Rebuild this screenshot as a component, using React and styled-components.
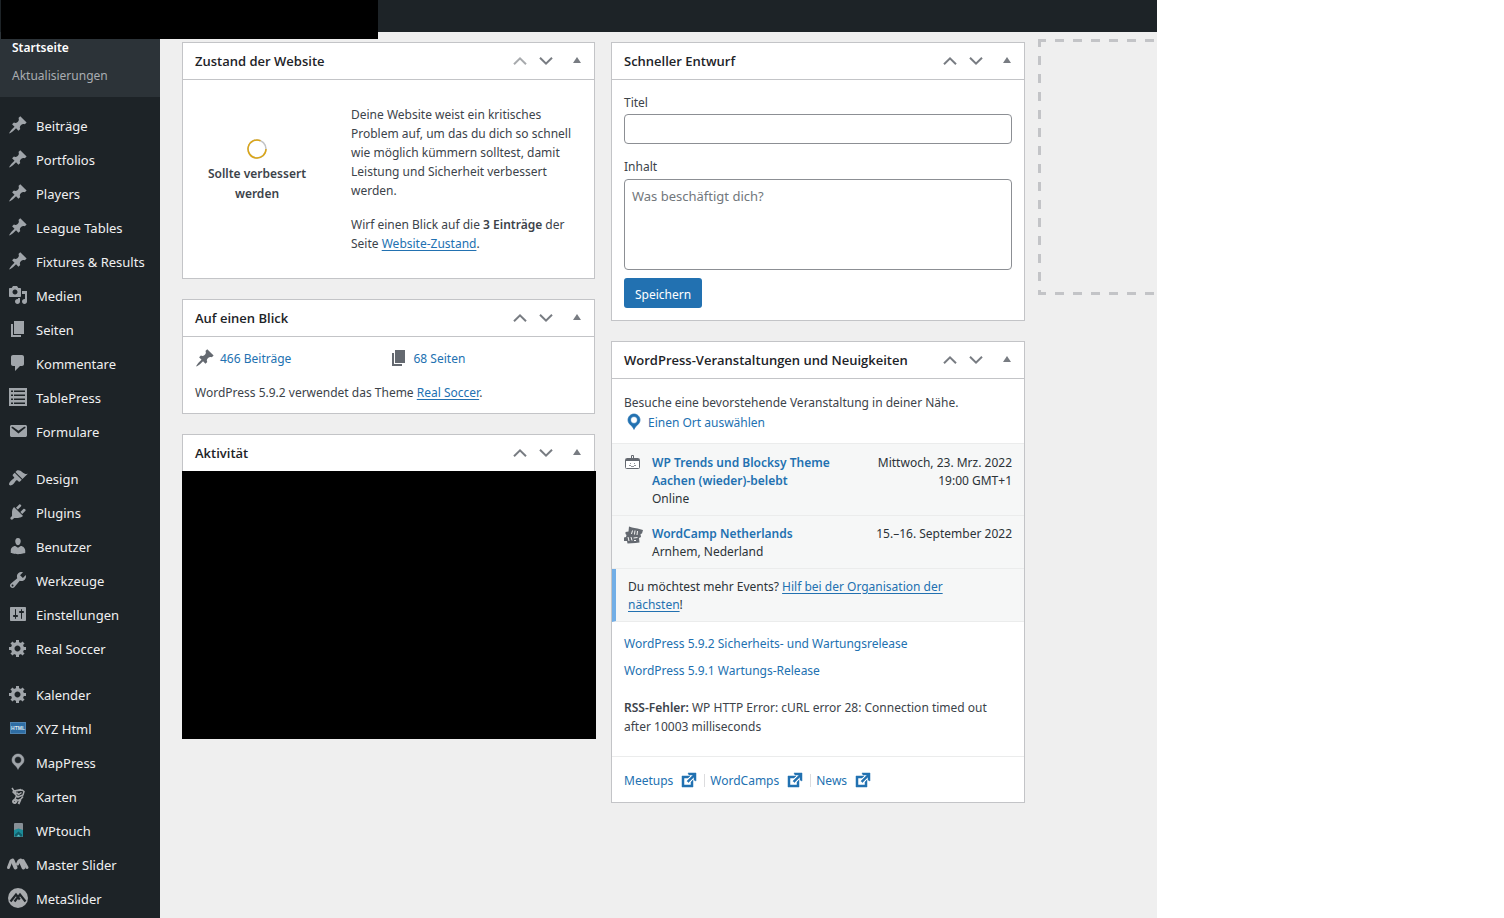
import styled, { createGlobalStyle } from "styled-components";

const GlobalStyle = createGlobalStyle`
  * {
    box-sizing: border-box;
  }
  body {
    margin: 0;
    background: #fff;
    color: #3c434a;
    font-family: "Noto Sans", "Open Sans", sans-serif;
    font-size: 12px;
    line-height: 19px;
  }
  p, h2, ul {
    margin: 0;
    padding: 0;
  }
  ul {
    list-style: none;
  }
  svg {
    display: block;
    flex: none;
  }
`;

// ---------- shell ----------

const Shell = styled.div`
  display: flex;
  flex-direction: column;
  min-height: 100vh;
  margin-right: 347px;
  background: #efefef;
  position: relative;
`;

const AdminBar = styled.header`
  height: 32px;
  background: #1d2327;
`;

const AdminBarCover = styled.div`
  position: absolute;
  top: 0;
  left: 1px;
  width: 377px;
  height: 39px;
  background: #000;
`;

const Page = styled.div`
  display: flex;
  flex: 1;
`;

// ---------- sidebar ----------

const Sidebar = styled.nav`
  flex: 0 0 160px;
  background: #1d2327;
`;

const SubMenu = styled.ul`
  padding: 2px 0 7px;
  margin-bottom: 12px;
  background: #2c3338;
`;

const SubLink = styled.a`
  display: block;
  padding: 0 12px;
  line-height: 28px;
  text-decoration: none;
  color: ${(p) => (p.$current ? "#fff" : "#a9adb1")};
  font-weight: ${(p) => (p.$current ? 600 : 400)};
`;

const MenuGroup = styled.ul`
  margin-bottom: ${(p) => p.$space || 0}px;
`;

const MenuLink = styled.a`
  display: flex;
  align-items: center;
  height: 34px;
  color: #f0f0f1;
  font-size: 13px;
  text-decoration: none;
  white-space: nowrap;
`;

const MenuIcon = styled.span`
  display: flex;
  justify-content: center;
  width: 36px;
  color: #a0a5aa;
  padding-bottom: 2px;
`;

// ---------- dashboard ----------

const Dashboard = styled.main`
  display: flex;
  flex: 1;
  min-width: 0;
  padding-left: 22px;
  overflow: hidden;
`;

const Column = styled.div`
  display: flex;
  flex-direction: column;
  flex: 0 0 44%;
  min-width: 0;
  gap: 20px;
  padding: 10px 16px 20px 0;
  & + & {
    padding-right: 15px;
  }
`;

const DropColumn = styled.div`
  flex: 0 0 44%;
  margin-left: -2px;
  padding-top: 7px;
`;

const DropZone = styled.div`
  height: 256px;
  background:
    repeating-linear-gradient(to right, #c3c4c7 0 9px, transparent 9px 18px) -1px 0 / 540px 3px repeat-x,
    repeating-linear-gradient(to right, #c3c4c7 0 9px, transparent 9px 18px) -1px 100% / 540px 3px repeat-x,
    repeating-linear-gradient(to bottom, #c3c4c7 0 9px, transparent 9px 18px) 0 -1px / 3px 270px no-repeat;
`;

const Box = styled.section`
  background: #fff;
  border: 1px solid #c3c4c7;
`;

const BoxHeader = styled.div`
  display: flex;
  align-items: center;
  height: 37px;
  padding-left: 12px;
  border-bottom: 1px solid #c3c4c7;
`;

const BoxTitle = styled.h2`
  flex: 1;
  color: #1d2327;
  font-family: "Open Sans", "Noto Sans", sans-serif;
  font-size: 13px;
  font-weight: 600;
  line-height: 18px;
`;

const HandleButton = styled.button`
  display: flex;
  align-items: center;
  justify-content: center;
  width: ${(p) => (p.$wide ? 35 : 26)}px;
  height: 36px;
  padding: 0;
  border: 0;
  background: none;
  color: ${(p) => (p.$faded ? "#a7aaad" : "#787c82")};
`;

const Link = styled.a`
  color: #2271b1;
  text-decoration: ${(p) => (p.$plain ? "none" : "underline")};
  text-underline-offset: 2px;
  font-weight: ${(p) => (p.$bold ? 600 : 400)};
`;

const Bold = styled.strong`
  font-weight: 600;
`;

// site health
const Health = styled.div`
  display: grid;
  grid-template-columns: 124px 1fr;
  gap: 32px;
  padding: 25px 12px;
`;

const HealthStatus = styled.div`
  display: flex;
  flex-direction: column;
  align-items: center;
  gap: 5px;
  padding-top: 34px;
  font-weight: 600;
  text-align: center;
  line-height: 20px;
`;

const HealthText = styled.div`
  display: flex;
  flex-direction: column;
  gap: 15px;
`;

// at a glance
const Glance = styled.div`
  padding: 11px 12px;
`;

const GlanceList = styled.ul`
  display: grid;
  grid-template-columns: 1fr 1fr;
  margin-bottom: 15px;
`;

const GlanceItem = styled.li`
  display: flex;
  align-items: center;
  gap: 5px;
  color: #646970;
`;

const ActivityCover = styled.div`
  height: 268px;
  margin: -1px -2px -1px -1px;
  background: #000;
`;

// quick draft
const DraftForm = styled.form`
  display: flex;
  flex-direction: column;
  align-items: flex-start;
  padding: 13px 12px 12px;
`;

const Label = styled.label`
  line-height: 20px;
  margin-bottom: ${(p) => p.$gap}px;
`;

const TextInput = styled.input`
  width: 100%;
  height: 30px;
  margin-bottom: 13px;
  padding: 0 8px;
  border: 1px solid #8c8f94;
  border-radius: 4px;
  font: inherit;
`;

const TextArea = styled.textarea`
  width: 100%;
  height: 91px;
  margin-bottom: 8px;
  padding: 6px 7px;
  border: 1px solid #8c8f94;
  border-radius: 4px;
  font-family: inherit;
  font-size: 13px;
  line-height: 20px;
  resize: none;
  &::placeholder {
    color: #72777c;
  }
`;

const SaveButton = styled.button`
  height: 30px;
  padding: 2px 11px 0;
  border: 0;
  border-radius: 3px;
  background: #2271b1;
  color: #fff;
  font: inherit;
`;

// events and news
const Location = styled.div`
  padding: 14px 12px 11px;
`;

const LocationLink = styled(Link)`
  display: flex;
  align-items: center;
  gap: 4px;
  height: 20px;
`;

const EventList = styled.ul`
  padding-top: 1px;
  border-top: 1px solid #ebecec;
  background: #f6f7f7;
  color: #2c3338;
  line-height: 18px;
`;

const EventItem = styled.li`
  display: flex;
  padding: 9px 12px 7px;
  border-bottom: 1px solid #ebecec;
`;

const EventIcon = styled.span`
  width: 28px;
  color: #646970;
`;

const EventInfo = styled.div`
  flex: 1;
  padding-right: 24px;
`;

const EventDate = styled.div`
  text-align: right;
  span {
    display: block;
  }
`;

const MoreEvents = styled.li`
  padding: 9px 56px 7px 12px;
  border-left: 4px solid #72aee6;
  border-bottom: 1px solid #ebecec;
`;

const NewsList = styled.ul`
  padding: 12px 12px 0;
`;

const NewsItem = styled.li`
  margin-bottom: 8px;
`;

const FeedError = styled.p`
  padding: 10px 12px 20px;
`;

const BoxFooter = styled.div`
  display: flex;
  align-items: center;
  height: 46px;
  padding: 1px 12px 0;
  border-top: 1px solid #ebecec;
`;

const FooterLink = styled(Link)`
  display: flex;
  align-items: center;
  gap: 6px;
  height: 13px;
  & + & {
    margin-left: 5px;
    padding-left: 5px;
    border-left: 1px solid #dcdcde;
  }
`;

// ---------- icons ----------

const Icon = ({ d, size = 20, stroke = 0 }) => (
  <svg
    width={size}
    height={size}
    viewBox="0 0 20 20"
    fill="currentColor"
    stroke={stroke ? "currentColor" : "none"}
    strokeWidth={stroke}
    fillRule="evenodd"
    aria-hidden="true"
  >
    <path d={d} />
  </svg>
);

const paths = {
  pin: "M10.44 3.02l1.82-1.82 6.36 6.35-1.83 1.82c-1.05-.68-2.48-.57-3.41.36l-.75.75c-.92.93-1.04 2.35-.35 3.41l-1.83 1.82-2.41-2.41-2.8 2.79c-.42.42-3.38 2.71-3.8 2.29s1.86-3.39 2.28-3.81l2.79-2.79L4.1 9.36l1.83-1.82c1.05.69 2.48.57 3.4-.36l.75-.75c.93-.92 1.05-2.35.36-3.41z",
  media: "M13 11V4c0-.55-.45-1-1-1h-1.67L9 1H5L3.67 3H2c-.55 0-1 .45-1 1v7c0 .55.45 1 1 1h10c.55 0 1-.45 1-1zM7 4.5c1.38 0 2.5 1.12 2.5 2.5S8.38 9.5 7 9.5 4.5 8.38 4.5 7 5.62 4.5 7 4.5zM14 6h5v10.5c0 1.38-1.12 2.5-2.5 2.5S14 17.88 14 16.5s1.12-2.5 2.5-2.5c.17 0 .34.02.5.05V9h-3V6zm-4 8.05V13h2v3.5c0 1.38-1.12 2.5-2.5 2.5S7 17.88 7 16.5 8.12 14 9.5 14c.17 0 .34.02.5.05z",
  page: "M6 15V2h10v13H6zm-1 1h8v2H3V5h2v11z",
  comment: "M5 2h9c1.1 0 2 .9 2 2v7c0 1.1-.9 2-2 2h-2l-5 5v-5H5c-1.1 0-2-.9-2-2V4c0-1.1.9-2 2-2z",
  list: "M1 1h18v18H1zM3 3.500v1.500h2V3.500zM6 3.500v1.500h11V3.500zM3 7.500v1.500h2V7.500zM6 7.500v1.500h11V7.500zM3 11.500v1.500h2v-1.500zM6 11.500v1.500h11v-1.500zM3 15.500v1.500h2v-1.500zM6 15.500v1.500h11v-1.500z",
  mail: "M3.87 4h13.25C18.37 4 19 4.59 19 5.79v8.42c0 1.19-.63 1.79-1.88 1.79H3.87c-1.25 0-1.88-.6-1.88-1.79V5.79c0-1.2.63-1.79 1.88-1.79zm6.62 8.6l6.74-5.53c.24-.2.43-.66.13-1.07-.29-.41-.82-.42-1.17-.17l-5.7 3.86L4.8 5.83c-.35-.25-.88-.24-1.17.17-.3.41-.11.87.13 1.07z",
  brush: "M14.48 11.06L7.41 3.99l1.5-1.5c.5-.56 2.3-.47 3.51.32 1.21.8 1.43 1.28 2.91 2.1 1.18.64 2.45 1.26 4.45.85zm-.71.71L6.7 4.7 4.93 6.47c-.39.39-.39 1.02 0 1.41l1.06 1.06c.39.39.39 1.03 0 1.42-.6.6-1.43 1.11-2.21 1.69-.35.26-.7.53-1.01.84C1.43 14.23.4 16.08 1.4 17.07c.99 1 2.84-.03 4.18-1.36.31-.31.58-.66.85-1.02.57-.78 1.08-1.61 1.69-2.21.39-.39 1.02-.39 1.41 0l1.06 1.06c.39.39 1.02.39 1.41 0z",
  plug: "M13.11 4.36L9.87 7.6 8 5.73l3.24-3.24c.35-.34 1.05-.2 1.56.32.52.51.66 1.21.31 1.55zm-8 1.77l.91-1.12 9.01 9.01-1.19.84c-.71.71-2.63 1.16-3.82 1.16H6.14L4.9 17.26c-.59.59-1.54.59-2.12 0-.59-.58-.59-1.53 0-2.12l1.24-1.24v-3.88c0-1.13.4-3.19 1.09-3.89zm7.26 3.97l3.24-3.24c.34-.35 1.04-.21 1.55.31.52.51.66 1.21.31 1.55l-3.24 3.25z",
  user: "M10 9.25c-2.27 0-2.73-3.44-2.73-3.44C7 4.02 7.82 2 9.97 2c2.16 0 2.98 2.02 2.71 3.81 0 0-.41 3.44-2.68 3.44zm0 2.57L12.72 10c2.39 0 4.52 2.33 4.52 4.53v2.49s-3.65 1.13-7.24 1.13c-3.65 0-7.24-1.13-7.24-1.13v-2.49c0-2.25 1.94-4.48 4.47-4.48z",
  wrench: "M16.68 9.77c-1.34 1.34-3.3 1.67-4.95.99l-5.41 6.52c-.99.99-2.59.99-3.58 0s-.99-2.59 0-3.57l6.52-5.42c-.68-1.65-.35-3.61.99-4.95 1.28-1.28 3.12-1.62 4.72-1.06l-2.89 2.89 2.82 2.82 2.86-2.87c.53 1.58.18 3.39-1.08 4.65zM3.81 16.21c.4.39 1.04.39 1.43 0 .4-.4.4-1.04 0-1.43-.39-.4-1.03-.4-1.43 0-.39.39-.39 1.03 0 1.43z",
  sliders: "M18 16V4c0-.55-.45-1-1-1H3c-.55 0-1 .45-1 1v12c0 .55.45 1 1 1h14c.55 0 1-.45 1-1zM8 11h1c.55 0 1 .45 1 1s-.45 1-1 1H8v1.5c0 .28-.22.5-.5.5s-.5-.22-.5-.5V13H6c-.55 0-1-.45-1-1s.45-1 1-1h1V5.5c0-.28.22-.5.5-.5s.5.22.5.5V11zm5-2h-1c-.55 0-1-.45-1-1s.45-1 1-1h1V5.5c0-.28.22-.5.5-.5s.5.22.5.5V7h1c.55 0 1 .45 1 1s-.45 1-1 1h-1v5.5c0 .28-.22.5-.5.5s-.5-.22-.5-.5V9z",
  gear: "M18 12h-2.18c-.17.7-.44 1.35-.81 1.93l1.54 1.54-2.1 2.1-1.54-1.54c-.58.36-1.23.63-1.91.79V19H8v-2.18c-.68-.16-1.33-.43-1.91-.79l-1.54 1.54-2.12-2.12 1.54-1.54c-.36-.58-.63-1.23-.79-1.91H1V9.03h2.17c.16-.7.44-1.35.8-1.94L2.43 5.55l2.1-2.1 1.54 1.54c.58-.37 1.24-.64 1.93-.81V2h3v2.18c.68.16 1.33.43 1.91.79l1.54-1.54 2.12 2.12-1.54 1.54c.36.59.64 1.24.8 1.94H18V12zm-8.5 1.5c1.66 0 3-1.34 3-3s-1.34-3-3-3-3 1.34-3 3 1.34 3 3 3z",
  place: "M10 2C6.69 2 4 4.69 4 8c0 2.02 1.17 3.71 2.53 4.89.43.37 1.18.96 1.85 1.83.74.97 1.41 2.01 1.62 2.71.21-.7.88-1.74 1.62-2.71.67-.87 1.42-1.46 1.85-1.83C14.83 11.71 16 10.02 16 8c0-3.31-2.69-6-6-6zm0 2.56c1.9 0 3.44 1.54 3.44 3.44S11.9 11.44 10 11.44 6.56 9.9 6.56 8 8.1 4.56 10 4.56z",
  external: "M9 3h8v8l-2-1V6.92l-5.6 5.59-1.41-1.41L14.08 5H10zm3 12v-3l2-2v7H3V6h8L9 8H5v7h7z",
  up: "M3.300 12.600L10 5.900l6.700 6.700-1.400 1.400L10 8.700 4.700 14z",
  down: "M3.300 7.400L10 14.100l6.700-6.700-1.400-1.400L10 11.300 4.700 6z",
  triangle: "M6 12l4-6 4 6z",
};

const HtmlIcon = () => (
  <svg width="20" height="20" viewBox="0 0 20 20" aria-hidden="true">
    <rect x="2.500" y="4.500" width="15" height="11" fill="#2e6da4" stroke="#4f83b0" />
    <text x="10" y="12" textAnchor="middle" fontFamily="Liberation Sans" fontWeight="700" fontSize="5" fill="#dfe8f0">
      HTML
    </text>
  </svg>
);

const FigureIcon = () => (
  <svg width="20" height="20" viewBox="0 0 20 20" fill="none" stroke="#a8abae" strokeWidth="1.500" aria-hidden="true">
    <path d="M4 2l2 3 7-1.500M4.500 5.500L8 9M7 5l7-1 2 1.500-1 3.500-5 2-2-2zM8.500 6.500l2 2 3-2M8.500 10L7 13l3 1.500 3-1.500 2-2.500" />
    <path d="M7 14c-2 0-2.500 1.500-1.500 2.500s2.500.5 3-1zM12.500 13.500L10.500 18" strokeWidth="2" />
  </svg>
);

const PhoneIcon = () => (
  <svg width="20" height="20" viewBox="0 0 20 20" aria-hidden="true">
    <rect x="6" y="3" width="9" height="14" rx="1" fill="#878f96" />
    <path d="M6 10l4.500-1.500L15 10v6.500H6z" fill="#1c8b98" />
    <path d="M7 14.500l3.500-3 3.500 3v2H7z" fill="#105c68" />
    <path d="M8.500 16.500l2-2 2 2z" fill="#5ac0c8" />
  </svg>
);

const WaveIcon = () => (
  <svg width="24" height="20" viewBox="0 0 24 20" fill="none" stroke="#a8abae" strokeLinecap="round" aria-hidden="true">
    <path d="M2.500 13.500L5 7M11.500 10L13 7" strokeWidth="3" />
    <path d="M6.500 6.500L9.500 13.500M14.500 6.500L17.500 13.500" strokeWidth="4" />
    <path d="M17 6.500L21 13.500" strokeWidth="3" />
  </svg>
);

const MetaIcon = () => (
  <svg width="20" height="20" viewBox="0 0 20 20" aria-hidden="true">
    <circle cx="10" cy="10" r="10" fill="#a8abae" />
    <path d="M2.500 13.500L8 6.500l3.800 5M6.500 13.500L12 6.500l5.500 7" fill="none" stroke="#1d2327" strokeWidth="2.200" />
  </svg>
);

const BadgeIcon = () => (
  <svg width="18" height="18" viewBox="0 0 18 18" fill="none" stroke="currentColor" aria-hidden="true">
    <path d="M7.500 1.500h2v3h-2z" />
    <rect x="1.500" y="4.500" width="14" height="10" rx="1" fill="#fff" />
    <path d="M2 6h13" strokeWidth="2" />
    <path d="M5 11.500h2M10 11.500h2M6 9.500h1M10 9.500h1M7 12.500h3" strokeOpacity=".7" />
  </svg>
);

const TicketIcon = () => (
  <svg width="20" height="20" viewBox="0 0 20 20" aria-hidden="true">
    <path d="M5 1.500l3 1 2.500.5 3 .5 5.500 1.500-1 3.500-1.500.500.5 3-2 1 .5 4.500-4 .5-8 .5-.5-2.500L0 16v-3.500l2-.5.5-2L1.500 9v-2l3-.5z" fill="currentColor" />
    <path d="M8.500 5.500L7.500 9M11 5.500l-.500 4M13.500 6l-.500 4M4 12l1 4M7 12l1 3.500M9.500 13l4-.500M10 15.500h2" stroke="#f6f7f7" strokeWidth="1" fill="none" />
  </svg>
);

const HealthRing = () => (
  <svg width="20" height="20" viewBox="0 0 20 20" fill="none" strokeWidth="1.500" aria-hidden="true">
    <circle cx="10" cy="10" r="9" stroke="#c3c4c7" />
    <path d="M19 10a9 9 0 1 1-5.500-8.300" stroke="#dba617" />
  </svg>
);

// ---------- data ----------

const menu = [
  {
    space: 13,
    items: [
      ["Beiträge", <Icon d={paths.pin} />],
      ["Portfolios", <Icon d={paths.pin} />],
      ["Players", <Icon d={paths.pin} />],
      ["League Tables", <Icon d={paths.pin} />],
      ["Fixtures & Results", <Icon d={paths.pin} />],
      ["Medien", <Icon d={paths.media} />],
      ["Seiten", <Icon d={paths.page} />],
      ["Kommentare", <Icon d={paths.comment} />],
      ["TablePress", <Icon d={paths.list} />],
      ["Formulare", <Icon d={paths.mail} />],
    ],
  },
  {
    space: 12,
    items: [
      ["Design", <Icon d={paths.brush} />],
      ["Plugins", <Icon d={paths.plug} />],
      ["Benutzer", <Icon d={paths.user} />],
      ["Werkzeuge", <Icon d={paths.wrench} />],
      ["Einstellungen", <Icon d={paths.sliders} />],
      ["Real Soccer", <Icon d={paths.gear} />],
    ],
  },
  {
    items: [
      ["Kalender", <Icon d={paths.gear} />],
      ["XYZ Html", <HtmlIcon />],
      ["MapPress", <Icon d={paths.place} stroke={0.5} />],
      ["Karten", <FigureIcon />],
      ["WPtouch", <PhoneIcon />],
      ["Master Slider", <WaveIcon />],
      ["MetaSlider", <MetaIcon />],
    ],
  },
];

const Widget = ({ title, first, children }) => (
  <Box>
    <BoxHeader>
      <BoxTitle>{title}</BoxTitle>
      <HandleButton type="button" aria-label="Nach oben" $faded={first}>
        <Icon d={paths.up} />
      </HandleButton>
      <HandleButton type="button" aria-label="Nach unten">
        <Icon d={paths.down} />
      </HandleButton>
      <HandleButton type="button" aria-label="Umschalten" $wide>
        <Icon d={paths.triangle} />
      </HandleButton>
    </BoxHeader>
    {children}
  </Box>
);

const App = () => {
  return (
    <Shell>
      <GlobalStyle />
      <AdminBar />
      <Page>
        <Sidebar>
          <SubMenu>
            <li>
              <SubLink href="#" $current>Startseite</SubLink>
            </li>
            <li>
              <SubLink href="#">Aktualisierungen</SubLink>
            </li>
          </SubMenu>
          {menu.map((group, i) => (
            <MenuGroup key={i} $space={group.space}>
              {group.items.map(([name, icon]) => (
                <li key={name}>
                  <MenuLink href="#">
                    <MenuIcon>{icon}</MenuIcon>
                    {name}
                  </MenuLink>
                </li>
              ))}
            </MenuGroup>
          ))}
        </Sidebar>

        <Dashboard>
          <Column>
            <Widget title="Zustand der Website" first>
              <Health>
                <HealthStatus>
                  <HealthRing />
                  Sollte verbessert werden
                </HealthStatus>
                <HealthText>
                  <p>
                    Deine Website weist ein kritisches Problem auf, um das du dich so schnell wie möglich
                    kümmern solltest, damit Leistung und Sicherheit verbessert werden.
                  </p>
                  <p>
                    Wirf einen Blick auf die <Bold>3 Einträge</Bold> der Seite{" "}
                    <Link href="#">Website-Zustand</Link>.
                  </p>
                </HealthText>
              </Health>
            </Widget>

            <Widget title="Auf einen Blick">
              <Glance>
                <GlanceList>
                  <GlanceItem>
                    <Icon d={paths.pin} />
                    <Link href="#" $plain>466 Beiträge</Link>
                  </GlanceItem>
                  <GlanceItem>
                    <Icon d={paths.page} />
                    <Link href="#" $plain>68 Seiten</Link>
                  </GlanceItem>
                </GlanceList>
                <p>
                  WordPress 5.9.2 verwendet das Theme <Link href="#">Real Soccer</Link>.
                </p>
              </Glance>
            </Widget>

            <Widget title="Aktivität">
              <ActivityCover />
            </Widget>
          </Column>

          <Column>
            <Widget title="Schneller Entwurf">
              <DraftForm>
                <Label htmlFor="title" $gap={1}>Titel</Label>
                <TextInput id="title" type="text" />
                <Label htmlFor="content" $gap={2}>Inhalt</Label>
                <TextArea id="content" placeholder="Was beschäftigt dich?" />
                <SaveButton type="button">Speichern</SaveButton>
              </DraftForm>
            </Widget>

            <Widget title="WordPress-Veranstaltungen und Neuigkeiten">
              <Location>
                <p>Besuche eine bevorstehende Veranstaltung in deiner Nähe.</p>
                <LocationLink href="#" $plain>
                  <Icon d={paths.place} stroke={0.7} />
                  Einen Ort auswählen
                </LocationLink>
              </Location>
              <EventList>
                <EventItem>
                  <EventIcon>
                    <BadgeIcon />
                  </EventIcon>
                  <EventInfo>
                    <Link href="#" $plain $bold>WP Trends und Blocksy Theme Aachen (wieder)-belebt</Link>
                    <div>Online</div>
                  </EventInfo>
                  <EventDate>
                    <span>Mittwoch, 23. Mrz. 2022</span>
                    <span>19:00 GMT+1</span>
                  </EventDate>
                </EventItem>
                <EventItem>
                  <EventIcon>
                    <TicketIcon />
                  </EventIcon>
                  <EventInfo>
                    <Link href="#" $plain $bold>WordCamp Netherlands</Link>
                    <div>Arnhem, Nederland</div>
                  </EventInfo>
                  <EventDate>
                    <span>15.–16. September 2022</span>
                  </EventDate>
                </EventItem>
                <MoreEvents>
                  Du möchtest mehr Events? <Link href="#">Hilf bei der Organisation der nächsten</Link>!
                </MoreEvents>
              </EventList>
              <NewsList>
                <NewsItem>
                  <Link href="#" $plain>WordPress 5.9.2 Sicherheits- und Wartungsrelease</Link>
                </NewsItem>
                <NewsItem>
                  <Link href="#" $plain>WordPress 5.9.1 Wartungs-Release</Link>
                </NewsItem>
              </NewsList>
              <FeedError>
                <Bold>RSS-Fehler:</Bold> WP HTTP Error: cURL error 28: Connection timed out after 10003
                milliseconds
              </FeedError>
              <BoxFooter>
                {["Meetups", "WordCamps", "News"].map((name) => (
                  <FooterLink key={name} href="#" $plain>
                    {name}
                    <Icon d={paths.external} stroke={0.5} />
                  </FooterLink>
                ))}
              </BoxFooter>
            </Widget>
          </Column>

          <DropColumn>
            <DropZone />
          </DropColumn>
        </Dashboard>
      </Page>
      <AdminBarCover />
    </Shell>
  );
};

export default App;
